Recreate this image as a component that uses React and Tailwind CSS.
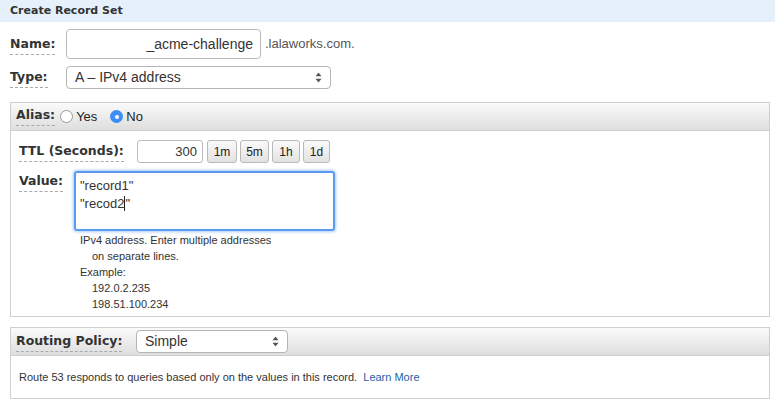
import { useState } from "react";

const labelFont = { fontFamily: '"DejaVu Sans", Verdana, sans-serif' };
const bodyFont = { fontFamily: '"Liberation Sans", Arial, sans-serif' };

const Label = ({ children, className = "" }) => (
  <span
    style={labelFont}
    className={`inline-block text-[12.5px] font-bold text-[#333] leading-[16px] pb-[2px] border-b border-dashed border-[#aaa] ${className}`}
  >
    {children}
  </span>
);

const Arrows = () => (
  <svg width="7" height="11" viewBox="0 0 7 11" className="shrink-0">
    <path d="M3.5 0.5 L6.5 4.3 H0.5 Z" fill="#555" />
    <path d="M3.5 10.5 L6.5 6.7 H0.5 Z" fill="#555" />
  </svg>
);

const Select = ({ value, className = "" }) => (
  <div
    style={bodyFont}
    className={`flex items-center justify-between h-[23px] bg-white border border-[#b5b5b5] rounded-[4px] pl-[8px] pr-[8px] text-[14px] text-[#333] ${className}`}
  >
    <span>{value}</span>
    <Arrows />
  </div>
);

const TtlButton = ({ children, w }) => (
  <button
    style={bodyFont}
    className={`${w} h-[23px] text-[12px] text-[#222] border border-[#b9b9b9] rounded-[3px] bg-gradient-to-b from-[#fafafa] to-[#e2e2e2]`}
  >
    {children}
  </button>
);

const Radio = ({ checked, label }) => (
  <span className="flex items-center" style={bodyFont}>
    {checked ? (
      <span className="w-[13px] h-[13px] rounded-full bg-[#3d8ef5] flex items-center justify-center">
        <span className="w-[4px] h-[4px] rounded-full bg-white" />
      </span>
    ) : (
      <span className="w-[13px] h-[13px] rounded-full bg-white border border-[#999]" />
    )}
    <span className="ml-[3px] text-[13px] text-[#222]">{label}</span>
  </span>
);

const PanelHeader = ({ children }) => (
  <div className="h-[28px] flex items-center px-[5px] bg-gradient-to-b from-[#fafafa] to-[#dedede] border-b border-[#cfcfcf]">
    {children}
  </div>
);

export default function App() {
  const [value] = useState('"record1"\n"recod2"');

  return (
    <div className="w-[775px] h-[408px] bg-white overflow-hidden">
      {/* Title bar */}
      <div className="h-[22px] bg-[#e5f0fb] flex items-center pl-[10px]">
        <span style={labelFont} className="text-[11px] font-bold text-[#333]">
          Create Record Set
        </span>
      </div>

      {/* Name */}
      <div className="flex items-center pl-[10px] mt-[7px] h-[30px]">
        <div className="w-[56px] leading-[16px]">
          <Label>Name:</Label>
        </div>
        <div
          style={bodyFont}
          className="w-[195px] h-[30px] border border-[#bbb] rounded-[4px] bg-white flex items-center justify-end pr-[7px] text-[14px] text-[#333]"
        >
          _acme-challenge
        </div>
        <span style={bodyFont} className="ml-[4px] text-[13px] text-[#555]">
          .lalaworks.com.
        </span>
      </div>

      {/* Type */}
      <div className="flex items-center pl-[10px] mt-[7px] h-[23px]">
        <div className="w-[56px] leading-[16px]">
          <Label>Type:</Label>
        </div>
        <Select value="A – IPv4 address" className="w-[265px]" />
      </div>

      {/* Alias panel */}
      <div className="ml-[10px] mr-[5px] mt-[13px] border border-[#cfcfcf]">
        <PanelHeader>
          <Label className="mr-[5px]">Alias:</Label>
          <div className="flex items-center gap-[13px]">
            <Radio label="Yes" />
            <Radio checked label="No" />
          </div>
        </PanelHeader>

        <div className="pl-[8px] pt-[9px] pb-[4px]">
          <div className="flex items-center h-[23px]">
            <div className="w-[118px] leading-[16px]">
              <Label>TTL (Seconds):</Label>
            </div>
            <div
              style={bodyFont}
              className="w-[66px] h-[23px] border border-[#bbb] rounded-[3px] flex items-center justify-end pr-[5px] text-[13px] text-[#333]"
            >
              300
            </div>
            <div className="flex gap-[3px] ml-[4px]">
              <TtlButton w="w-[30px]">1m</TtlButton>
              <TtlButton w="w-[29px]">5m</TtlButton>
              <TtlButton w="w-[28px]">1h</TtlButton>
              <TtlButton w="w-[27px]">1d</TtlButton>
            </div>
          </div>

          <div className="flex items-start mt-[8px]">
            <div className="w-[55px] leading-[16px]">
              <Label>Value:</Label>
            </div>
            <div>
              <div
                style={bodyFont}
                className="w-[261px] h-[60px] border-2 border-[#5a9bf0] rounded-[3px] shadow-[0_0_3px_1px_#a9cbf7] pl-[4px] pt-[4px] text-[13px] leading-[18px] text-[#333] whitespace-pre"
              >
                {value.split("\n")[0]}
                {"\n"}
                "recod2<span className="inline-block w-px h-[15px] bg-[#222] align-[-3px]" />"
              </div>
              <div
                style={bodyFont}
                className="pl-[6px] pt-[1px] text-[11px] leading-[16px] text-[#333]"
              >
                <div>IPv4 address. Enter multiple addresses</div>
                <div className="pl-[12px]">on separate lines.</div>
                <div>Example:</div>
                <div className="pl-[12px]">192.0.2.235</div>
                <div className="pl-[12px]">198.51.100.234</div>
              </div>
            </div>
          </div>
        </div>
      </div>

      {/* Routing panel */}
      <div className="ml-[10px] mr-[5px] mt-[10px] border border-[#cfcfcf]">
        <PanelHeader>
          <div className="w-[120px] leading-[16px]">
            <Label>Routing Policy:</Label>
          </div>
          <Select value="Simple" className="w-[152px]" />
        </PanelHeader>
        <div style={bodyFont} className="h-[42px] flex items-center pl-[8px] text-[11px] text-[#333]">
          Route 53 responds to queries based only on the values in this record.&nbsp;&nbsp;
          <span className="text-[#1e5fa8]">Learn More</span>
        </div>
      </div>
    </div>
  );
}
